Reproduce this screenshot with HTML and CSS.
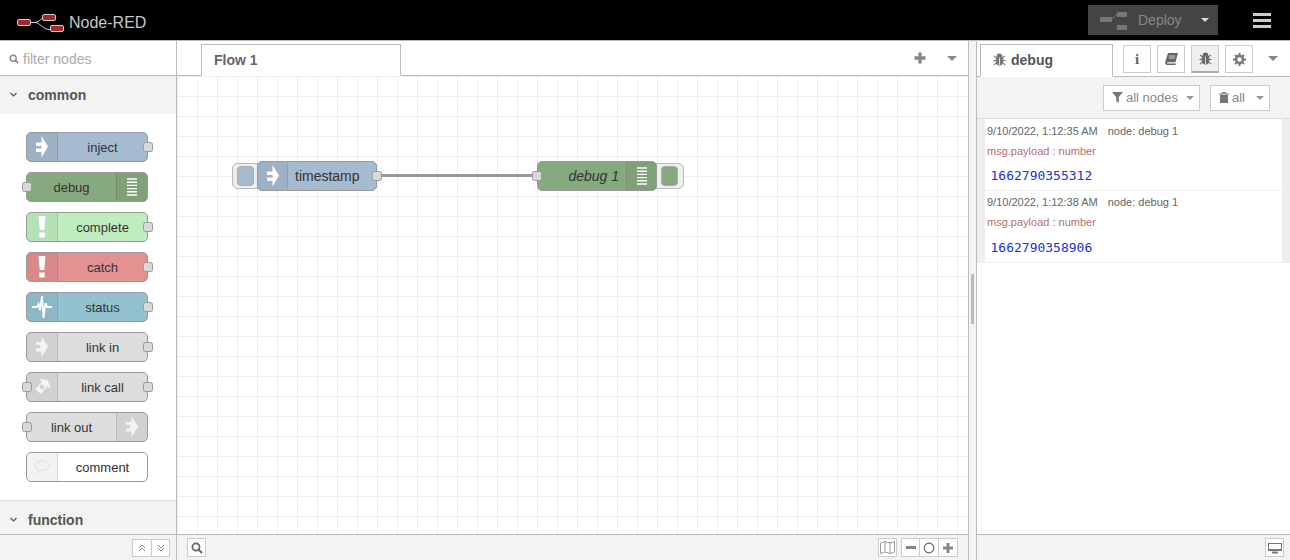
FILE: index.html
```html
<!DOCTYPE html>
<html lang="en">

<head>
  <meta charset="UTF-8" />
  <title>Node-RED</title>
  <link rel="stylesheet" href="styles.css">
</head>

<body>
  <svg class="defs">
    <defs>
      <symbol id="i-arrow" viewBox="0 0 12 22">
        <path d="M5.500 0 L12 10.500 L5.500 21.500 L5.500 16 L0 16 L0 12.500 L5.500 12.500 L5.500 10 L0 10 L0 6.500 L5.500 6.500 Z" fill="#fff" />
      </symbol>
      <symbol id="i-list" viewBox="0 0 10 18">
        <path d="M0 1h10M0 4.200h10M0 7.400h10M0 10.600h10M0 13.800h10M0 17h10" stroke="#fff" stroke-width="1.400" />
      </symbol>
      <symbol id="i-alert" viewBox="0 0 8 22">
        <path d="M0.500 0h7l-1.200 14h-4.600z M1.300 16.500h5.400v5h-5.400z" fill="#fff" />
      </symbol>
      <symbol id="i-pulse" viewBox="0 0 20 22">
        <path d="M0 11h5l1.500-3 1.500 6 2-14 1.500 22 2-15 1.500 4h5" fill="none" stroke="#fff" stroke-width="1.800" />
      </symbol>
      <symbol id="i-link" viewBox="0 0 12 22">
        <path fill-rule="evenodd" d="M5.500 0 L12 10.500 L5.500 21.500 L5.500 15.500 L0 15.500 L0 6 L5.500 6 Z M4.200 10.700 A2.200 2.200 0 1 0 -.2 10.700 A2.200 2.200 0 1 0 4.200 10.700 Z" fill="#f4f4f4" />
      </symbol>
      <symbol id="i-call" viewBox="0 0 18 22">
        <g transform="translate(9 11) rotate(-50) scale(.75) translate(0 -10.700)">
          <path fill-rule="evenodd" d="M5.500 0 L12 10.500 L5.500 21.500 L5.500 15.500 L-8 15.500 L-8 6 L5.500 6 Z M3 10.700 A3 3 0 1 0 -3 10.700 A3 3 0 1 0 3 10.700 Z" fill="#f4f4f4" />
        </g>
      </symbol>
      <symbol id="i-bubble" viewBox="0 0 16 14">
        <path d="M8 1C4 1 .8 3 .8 5.700c0 1.800 1.400 3.200 3.200 4 0 1.300-.6 2.300-1.400 3 1.700-.2 3-1 3.900-2.300.5.100 1 .1 1.500.1 4 0 7.200-2.100 7.200-4.800S12 1 8 1z" fill="none" stroke="#ddd" />
      </symbol>
      <symbol id="i-bug" viewBox="0 0 14 14">
        <path d="M4.500 3.500a2.500 2.500 0 0 1 5 0zM3.500 4.500h7v5a3.500 3.500 0 0 1-7 0zM1 3l2.500 2M13 3l-2.500 2M.5 8h3M13.500 8h-3M1 13l2.500-2.500M13 13l-2.500-2.500" fill="currentColor" stroke="currentColor" stroke-width="1.100" />
        <path d="M7 5v8" stroke="#fff" stroke-width=".8" />
      </symbol>
      <symbol id="i-search" viewBox="0 0 12 12">
        <circle cx="5" cy="5" r="3.600" fill="none" stroke="currentColor" stroke-width="1.700" />
        <path d="M7.700 7.700L11 11" stroke="currentColor" stroke-width="2" />
      </symbol>
    </defs>
  </svg>

  <header class="topbar">
    <div class="logo">
      <svg class="logo-mark" width="48" height="20" viewBox="0 0 48 20">
        <path d="M14 9.500h4c5 0 6-5.500 11-5.500h2M18 9.500c5 0 8 7 14 7h2" fill="none" stroke="#ccc" stroke-width="1" />
        <rect x="0.500" y="6.500" width="13" height="6" rx="1.500" fill="#a6282f" stroke="#ccc" />
        <rect x="25.500" y="1.500" width="13" height="6" rx="1.500" fill="#a6282f" stroke="#ccc" />
        <rect x="33.500" y="12.500" width="13" height="6" rx="1.500" fill="#a6282f" stroke="#ccc" />
      </svg>
      <span>Node-RED</span>
    </div>
    <div class="deploy">
      <div class="deploy-main">
        <svg width="28" height="20" viewBox="0 0 28 20">
          <rect x="0" y="7" width="12" height="5" fill="#777" />
          <rect x="17" y="2" width="10" height="5" fill="#777" />
          <rect x="17" y="15" width="10" height="5" fill="#777" />
          <path d="M12 9l5-5" stroke="#777" stroke-width="1" fill="none" />
        </svg>
        <span>Deploy</span>
      </div>
      <div class="deploy-caret"><i class="caret caret-light"></i></div>
    </div>
    <div class="burger"><i></i><i></i><i></i></div>
  </header>

  <main class="app">
    <aside class="palette">
      <div class="filter">
        <svg class="filter-icon" width="10" height="10"><use href="#i-search" /></svg>
        <span>filter nodes</span>
      </div>
      <div class="cat-head">
        <svg class="chev" width="7" height="5" viewBox="0 0 7 5"><path d="M.5 1l3 3 3-3" fill="none" stroke="#555" stroke-width="1.100" /></svg>
        <span>common</span>
      </div>
      <div class="cat-list">
        <div class="pnode n-inject">
          <div class="icon"><svg width="12" height="22"><use href="#i-arrow" /></svg></div>
          <div class="label">inject</div><i class="port port-r"></i>
        </div>
        <div class="pnode n-debug">
          <i class="port port-l"></i>
          <div class="label">debug</div>
          <div class="icon icon-r"><svg width="10" height="18"><use href="#i-list" /></svg></div>
        </div>
        <div class="pnode n-complete">
          <div class="icon"><svg width="8" height="22"><use href="#i-alert" /></svg></div>
          <div class="label">complete</div><i class="port port-r"></i>
        </div>
        <div class="pnode n-catch">
          <div class="icon"><svg width="8" height="22"><use href="#i-alert" /></svg></div>
          <div class="label">catch</div><i class="port port-r"></i>
        </div>
        <div class="pnode n-status">
          <div class="icon"><svg width="20" height="22"><use href="#i-pulse" /></svg></div>
          <div class="label">status</div><i class="port port-r"></i>
        </div>
        <div class="pnode n-link">
          <div class="icon"><svg width="12" height="22"><use href="#i-link" /></svg></div>
          <div class="label">link in</div><i class="port port-r"></i>
        </div>
        <div class="pnode n-link">
          <i class="port port-l"></i>
          <div class="icon"><svg width="18" height="22"><use href="#i-call" /></svg></div>
          <div class="label">link call</div><i class="port port-r"></i>
        </div>
        <div class="pnode n-link">
          <i class="port port-l"></i>
          <div class="label">link out</div>
          <div class="icon icon-r"><svg width="12" height="22"><use href="#i-link" /></svg></div>
        </div>
        <div class="pnode n-comment">
          <div class="icon"><svg width="16" height="14"><use href="#i-bubble" /></svg></div>
          <div class="label">comment</div>
        </div>
      </div>
      <div class="cat-head cat-function">
        <svg class="chev" width="7" height="5" viewBox="0 0 7 5"><path d="M.5 1l3 3 3-3" fill="none" stroke="#555" stroke-width="1.100" /></svg>
        <span>function</span>
      </div>
      <div class="foot foot-palette">
        <div class="btn-group">
          <button class="fbtn fbtn-small"><svg width="8" height="8" viewBox="0 0 8 8"><path d="M1 4l3-3 3 3M1 7l3-3 3 3" fill="none" stroke="#888" /></svg></button>
          <button class="fbtn fbtn-small"><svg width="8" height="8" viewBox="0 0 8 8"><path d="M1 1l3 3 3-3M1 4l3 3 3-3" fill="none" stroke="#888" /></svg></button>
        </div>
      </div>
    </aside>

    <section class="workspace">
      <div class="tabs">
        <div class="flow-tab">Flow 1</div>
        <div class="tab-tools">
          <svg width="12" height="12" viewBox="0 0 12 12"><path d="M6 .5v11M.5 6h11" stroke="#888" stroke-width="3.400" /></svg>
          <i class="caret"></i>
        </div>
      </div>
      <div class="canvas">
        <div class="button-nub nub-l"><i class="nub-in nub-blue"></i></div>
        <div class="button-nub nub-r"><i class="nub-in nub-green"></i></div>
        <div class="wire"></div>
        <div class="fnode n-inject node-ts">
          <div class="icon"><svg width="12" height="22"><use href="#i-arrow" /></svg></div>
          <div class="label">timestamp</div><i class="port port-r"></i>
        </div>
        <div class="fnode n-debug node-db">
          <i class="port port-l"></i>
          <div class="label label-em">debug 1</div>
          <div class="icon icon-r"><svg width="10" height="18"><use href="#i-list" /></svg></div>
        </div>
      </div>
      <div class="foot foot-work">
        <button class="fbtn fbtn-solo foot-search"><svg width="12" height="12"><use href="#i-search" /></svg></button>
        <div class="foot-right">
          <button class="fbtn fbtn-solo"><svg width="15" height="13" viewBox="0 0 15 13"><path d="M.5 2l4.500-1.500 5 1.500 4.500-1.500v10.500l-4.500 1.500-5-1.500-4.500 1.500zM5 .5v10.500M10 2v10.500" fill="none" stroke="#999" /></svg></button>
          <div class="btn-group group-zoom">
            <button class="fbtn"><svg width="10" height="4"><rect width="10" height="3" fill="#888" /></svg></button>
            <button class="fbtn"><svg width="12" height="12"><circle cx="6" cy="6" r="4.800" fill="none" stroke="#666" stroke-width="1.200" /></svg></button>
            <button class="fbtn"><svg width="10" height="10" viewBox="0 0 10 10"><path d="M5 0v10M0 5h10" stroke="#888" stroke-width="3" /></svg></button>
          </div>
        </div>
      </div>
    </section>

    <div class="separator"><i class="grip"></i></div>

    <aside class="sidebar">
      <div class="side-tabs">
        <div class="side-tab">
          <svg width="13" height="13" class="bug-dim"><use href="#i-bug" /></svg>
          <span>debug</span>
        </div>
        <div class="side-btns">
          <button class="sbtn"><span class="info">i</span></button>
          <button class="sbtn">
            <svg width="13" height="12" viewBox="0 0 13 12"><path d="M3 0h10l-2.500 9.300H3c-1.200 0-1.200 1.300 0 1.300h7.800l-.3 1.400H2.500C.6 12-.2 10.400.3 8.800z" fill="#666" /><path d="M4.200 3h6M3.700 5h6" stroke="#fff" stroke-width=".7" /></svg>
          </button>
          <button class="sbtn sbtn-on"><svg width="13" height="13"><use href="#i-bug" /></svg></button>
          <button class="sbtn">
            <svg width="13" height="13" viewBox="0 0 13 13"><circle cx="6.500" cy="6.500" r="3.500" fill="none" stroke="#777" stroke-width="2.500" /><path d="M6.500 0v13M0 6.500h13M2 2l9 9M11 2l-9 9" stroke="#777" stroke-width="2" stroke-dasharray="2.200 8.600" /></svg>
          </button>
        </div>
        <i class="caret side-caret"></i>
      </div>
      <div class="side-toolbar">
        <div class="select sel-nodes">
          <svg width="11" height="11" viewBox="0 0 11 11"><path d="M0 0h11L6.800 5v6L4.200 9V5z" fill="#777" /></svg>
          <span>all nodes</span><i class="caret caret-sm"></i>
        </div>
        <div class="select sel-all">
          <svg width="10" height="11" viewBox="0 0 10 11"><path d="M0 2h10M3.500 2V.5h3V2" fill="none" stroke="#777" /><path d="M1 3h8v8H1z" fill="#777" /></svg>
          <span>all</span><i class="caret caret-sm"></i>
        </div>
      </div>
      <div class="messages">
        <div class="msg">
          <div class="msg-meta"><span>9/10/2022, 1:12:35 AM</span><span>node: debug 1</span></div>
          <div class="msg-topic">msg.payload : number</div>
          <div class="msg-val">1662790355312</div>
        </div>
        <div class="msg">
          <div class="msg-meta"><span>9/10/2022, 1:12:38 AM</span><span>node: debug 1</span></div>
          <div class="msg-topic">msg.payload : number</div>
          <div class="msg-val">1662790358906</div>
        </div>
      </div>
      <div class="side-fill"></div>
      <div class="foot foot-side">
        <button class="fbtn fbtn-solo"><svg width="14" height="12" viewBox="0 0 14 12"><path d="M0 1h14v8H0z" fill="#777" /><path d="M1 2h12v5H1z" fill="#fff" /><path d="M4 10.500h6" stroke="#777" stroke-width="2" /></svg></button>
      </div>
    </aside>
  </main>
</body>

</html>
```

FILE: styles.css
```css
* {
  margin: 0;
  padding: 0;
  box-sizing: border-box;
}

html, body {
  width: 100%;
  height: 100%;
  overflow: hidden;
  background: #fff;
  font-family: "Liberation Sans", Arial, sans-serif;
  font-size: 14px;
  color: #555;
}

.defs {
  display: none;
}

button {
  font: inherit;
  cursor: pointer;
}

.caret {
  display: block;
  width: 0;
  height: 0;
  border-left: 5px solid transparent;
  border-right: 5px solid transparent;
  border-top: 5px solid #888;
}

.caret-light {
  border-left-width: 4.5px;
  border-right-width: 4.5px;
  border-top-width: 4px;
  border-top-color: #ddd;
}

.caret-sm {
  border-left-width: 4.5px;
  border-right-width: 4.5px;
  border-top-width: 4px;
  border-top-color: #999;
}

/* top bar */
.topbar {
  height: 40px;
  background: #000;
  display: flex;
  align-items: center;
}

.logo {
  display: flex;
  align-items: center;
  padding-left: 17px;
  flex: 1;
  color: #c7c7c7;
  font-size: 16px;
}

.logo-mark {
  margin-top: 5px;
  margin-right: 4px;
}

.logo span {
  margin-top: 5px;
}

.deploy {
  width: 130px;
  height: 30px;
  background: #444;
  display: flex;
  align-items: center;
  color: #888;
}

.deploy-main {
  display: flex;
  align-items: center;
  gap: 10px;
  padding-left: 12px;
  flex: 1;
}

.deploy-caret {
  width: 25px;
  padding-left: 8px;
}

.burger {
  width: 18px;
  margin-left: 35px;
  margin-right: 19px;
  display: flex;
  flex-direction: column;
  gap: 3px;
}

.burger i {
  display: block;
  height: 3px;
  background: #ccc;
}

/* layout */
.app {
  height: 520px;
  display: flex;
  border-top: 1px solid #bbb;
}

.palette {
  width: 177px;
  border-right: 1px solid #bbb;
  display: flex;
  flex-direction: column;
  background: #fff;
}

.filter {
  height: 35px;
  border-bottom: 1px solid #bbb;
  display: flex;
  align-items: center;
  padding: 3px 0 0 9px;
  gap: 4px;
  color: #aaa;
}

.filter-icon {
  color: #888;
}

.cat-head {
  height: 38px;
  background: #f3f3f3;
  display: flex;
  align-items: center;
  padding-left: 10px;
  gap: 11px;
  font-weight: bold;
  color: #555;
}

.cat-list {
  height: 387px;
  padding: 18px 0 0 26px;
  display: flex;
  flex-direction: column;
  gap: 10px;
}

.cat-function {
  height: 34px;
  border-top: 1px solid #ddd;
  padding-top: 4px;
}

/* nodes */
.pnode, .fnode {
  position: relative;
  width: 122px;
  height: 30px;
  border: 1px solid #999;
  border-radius: 5px;
  display: flex;
  align-items: stretch;
  font-size: 13px;
  color: #333;
  flex: none;
}

.fnode {
  position: absolute;
  font-size: 14px;
}

.icon {
  width: 31px;
  flex: none;
  display: flex;
  align-items: center;
  justify-content: center;
  background: rgba(0, 0, 0, 0.05);
  border-right: 1px solid rgba(0, 0, 0, 0.1);
  border-radius: 4px 0 0 4px;
}

.icon-r {
  border-right: 0;
  border-left: 1px solid rgba(0, 0, 0, 0.1);
  border-radius: 0 4px 4px 0;
}

.label {
  flex: 1;
  display: flex;
  align-items: center;
  justify-content: center;
  padding-top: 1px;
}

.port {
  position: absolute;
  top: 9px;
  width: 10px;
  height: 10px;
  background: #d9d9d9;
  border: 1px solid #999;
  border-radius: 2.5px;
}

.port-l {
  left: -5px;
}

.port-r {
  right: -6px;
}

.fnode .port-l {
  left: -6px;
}

.n-inject { background: #a6bbcf; }
.n-debug { background: #87a980; }
.n-complete { background: #c0edc0; }
.n-catch { background: #e49191; }
.n-status { background: #94c1d0; }
.n-link { background: #ddd; }
.n-comment { background: #fff; }

/* workspace */
.workspace {
  width: 791px;
  display: flex;
  flex-direction: column;
}

.tabs {
  height: 35px;
  border-bottom: 1px solid #bbb;
  display: flex;
  align-items: flex-end;
  padding-left: 24px;
  position: relative;
}

.flow-tab {
  width: 200px;
  height: 32px;
  margin-bottom: -1px;
  border: 1px solid #bbb;
  border-bottom-color: #fff;
  background: #fff;
  padding: 7px 0 0 12px;
  font-weight: bold;
  color: #666;
}

.tab-tools {
  margin-left: auto;
  height: 34px;
  display: flex;
  align-items: center;
  gap: 21px;
  padding-right: 11px;
}

.canvas {
  position: relative;
  height: 458px;
  overflow: hidden;
  background-color: #fff;
  background-image:
    linear-gradient(to right, #eee 1px, transparent 1px),
    linear-gradient(to bottom, #eee 1px, transparent 1px);
  background-size: 20px 20px;
  background-position: 0 0;
}

.node-ts {
  left: 80px;
  top: 85px;
  width: 120px;
}

.node-db {
  left: 360px;
  top: 85px;
  width: 120px;
}

.node-ts .icon, .node-db .icon {
  width: 30px;
}

.node-ts .label {
  justify-content: flex-start;
  padding-left: 7px;
  color: #333;
  padding-top: 0;
}

.node-db .label {
  justify-content: flex-end;
  padding-right: 7px;
  padding-top: 0;
}

.label-em {
  font-style: italic;
}

.wire {
  position: absolute;
  left: 204px;
  top: 98px;
  width: 156px;
  height: 3px;
  background: #999;
}

.button-nub {
  position: absolute;
  top: 87px;
  width: 32px;
  height: 26px;
  background: #eee;
  border: 1px solid #bbb;
  border-radius: 5px;
  display: flex;
  align-items: center;
}

.nub-l {
  left: 55px;
  padding-left: 4px;
}

.nub-r {
  left: 474px;
  padding-left: 9px;
  width: 33px;
}

.nub-in {
  display: block;
  width: 17px;
  height: 20px;
  border: 1px solid #aaa;
  border-radius: 4px;
}

.nub-blue { background: #a6bbcf; }
.nub-green { background: #87a980; }

/* footers */
.foot {
  height: 26px;
  background: #f3f3f3;
  border-top: 1px solid #bbb;
  display: flex;
  align-items: center;
  flex: none;
}

.foot-palette {
  justify-content: flex-end;
  padding: 1px 6px 0 0;
}

.foot-work {
  padding: 0 10px;
  justify-content: space-between;
}

.foot-right {
  display: flex;
  gap: 4px;
}

.foot-side {
  justify-content: flex-end;
  padding-right: 6px;
}

.foot-search {
  color: #666;
}

.btn-group {
  display: flex;
  border: 1px solid #ccc;
  background: #fff;
}

.fbtn {
  width: 18px;
  height: 17px;
  border: 0;
  background: #fff;
  display: flex;
  align-items: center;
  justify-content: center;
}

.fbtn + .fbtn {
  border-left: 1px solid #ccc;
}

.fbtn-small {
  height: 16px;
}

.fbtn-solo {
  width: 19px;
  height: 19px;
  border: 1px solid #ccc;
}

.group-zoom .fbtn {
  width: 19px;
}

.group-zoom .fbtn:first-child {
  width: 17px;
}

/* separator */
.separator {
  width: 9px;
  background: #f3f3f3;
  border-left: 1px solid #bbb;
  border-right: 1px solid #bbb;
  display: flex;
  align-items: center;
  justify-content: center;
}

.grip {
  display: block;
  width: 3px;
  height: 50px;
  margin: 0 1px 4px 0;
  background: #bbb;
}

/* debug sidebar */
.sidebar {
  flex: 1;
  display: flex;
  flex-direction: column;
  min-width: 0;
}

.side-tabs {
  height: 35px;
  display: flex;
  align-items: flex-start;
  position: relative;
  z-index: 1;
  background: #fff;
  padding-left: 3px;
}

.side-tab {
  width: 133px;
  height: 33px;
  margin-top: 3px;
  border: 1px solid #bbb;
  border-bottom-color: #fff;
  background: #fff;
  display: flex;
  align-items: center;
  gap: 5px;
  padding: 0 0 2px 12px;
  font-weight: bold;
  color: #555;
  margin-bottom: -1px;
  position: relative;
}

.bug-dim {
  color: #777;
}

.side-btns {
  display: flex;
  gap: 6px;
  margin-left: 10px;
  margin-top: 4px;
}

.sbtn {
  width: 28px;
  height: 28px;
  border: 1px solid #ccc;
  background: #fff;
  display: flex;
  align-items: center;
  justify-content: center;
  color: #666;
}

.sbtn-on {
  background: #efefef;
  border-bottom: 2px solid #aaa;
}

.info {
  font-family: "Liberation Serif", serif;
  font-weight: bold;
  font-size: 15px;
  color: #666;
}

.side-caret {
  margin: 15px 0 0 15px;
}

.side-toolbar {
  height: 43px;
  background: #f3f3f3;
  border-top: 1px solid #bbb;
  border-bottom: 1px solid #ddd;
  display: flex;
  align-items: center;
  justify-content: flex-end;
  gap: 10px;
  padding-right: 20px;
}

.select {
  height: 26px;
  border: 1px solid #ccc;
  background: #fff;
  display: flex;
  align-items: center;
  gap: 3px;
  font-size: 13px;
  color: #888;
  padding-left: 8px;
}

.sel-nodes {
  width: 97px;
}

.sel-all {
  width: 60px;
}

.select .caret {
  margin-left: auto;
  margin-right: 5px;
}

.messages {
  background: #eee;
  padding: 0 8px;
  height: 144px;
}

.msg {
  height: 72px;
  background: #fff;
  border-bottom: 1px solid #eee;
  padding-left: 2px;
}

.msg-meta {
  display: flex;
  gap: 10px;
  font-size: 11px;
  color: #666;
  padding-top: 5px;
  line-height: 14px;
}

.msg-topic {
  font-size: 11px;
  color: #b56f6f;
  margin-top: 6px;
  line-height: 14px;
}

.msg-val {
  font-family: "DejaVu Sans Mono", monospace;
  font-size: 13px;
  color: #2033d6;
  padding-left: 3.5px;
  margin-top: 10px;
  line-height: 16px;
}

.msg + .msg .msg-meta {
  padding-top: 4px;
}

.msg + .msg .msg-val {
  margin-top: 11px;
}

.side-fill {
  flex: 1;
}
```
